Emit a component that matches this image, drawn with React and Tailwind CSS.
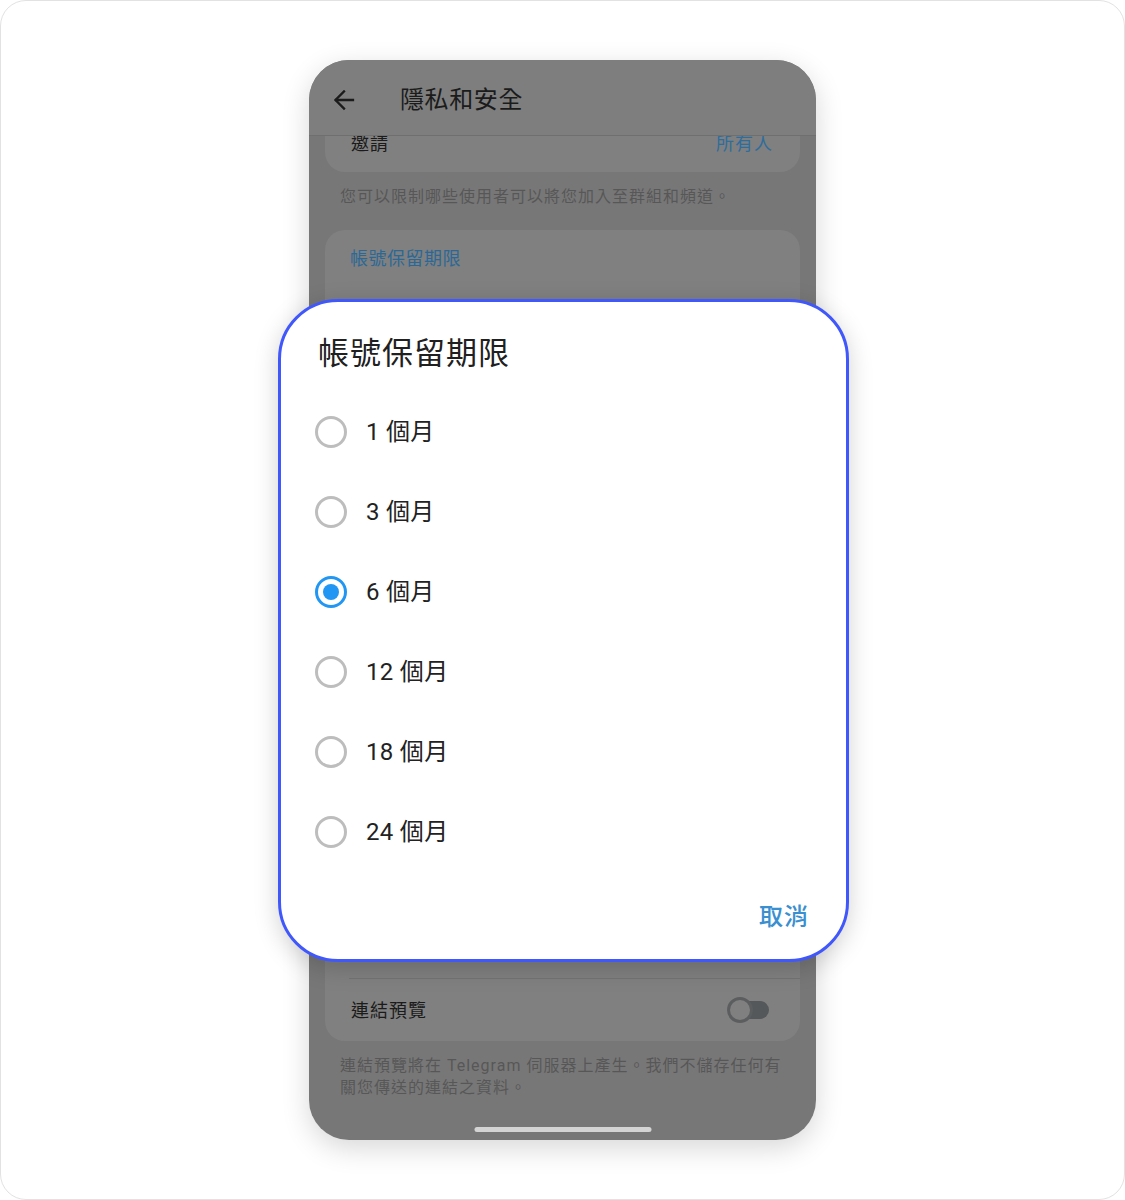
import { useState } from 'react'

const font = { fontFamily: 'Roboto, "Noto Sans CJK TC", "Noto Sans CJK SC", sans-serif' }

const options = ['1 個月', '3 個月', '6 個月', '12 個月', '18 個月', '24 個月']

function BackArrow() {
  return (
    <svg width="22" height="22" viewBox="0 0 22 22" fill="none" stroke="#1b1b1b" strokeWidth="2.3" strokeLinecap="square">
      <path d="M20 11H3" />
      <path d="M11 2.5L2.5 11L11 19.5" />
    </svg>
  )
}

function Radio({ checked }) {
  return (
    <span
      className={
        'flex h-[32px] w-[32px] shrink-0 items-center justify-center rounded-full border-[3px] ' +
        (checked ? 'border-[#2196f3]' : 'border-[#bdbdbd]')
      }
    >
      {checked && <span className="h-[16px] w-[16px] rounded-full bg-[#2196f3]" />}
    </span>
  )
}

export default function App() {
  const [value, setValue] = useState('6 個月')

  return (
    <div style={font} className="relative h-[1200px] w-[1125px] overflow-hidden rounded-[26px] border border-[#e2e2e2] bg-white">
      <div className="relative mx-auto mt-[59px] flex h-[1080px] w-[507px] flex-col overflow-hidden rounded-[40px] bg-[#777777] shadow-[0_8px_28px_rgba(0,0,0,0.16)]">
        <div className="relative z-10 flex h-[76px] shrink-0 items-center border-b border-[#6f6f6f] bg-[#7e7e7e] pl-[24px] pt-[5px]">
          <BackArrow />
          <span className="ml-[45px] text-[24px] leading-[32px] tracking-[0.6px] text-[#1b1b1b]">隱私和安全</span>
        </div>

        <div className="flex flex-1 flex-col px-[16px]">
          <div className="-mt-[22px] flex h-[58px] shrink-0 items-center justify-between rounded-[20px] bg-[#808080] pl-[26px] pr-[27px] text-[18px] tracking-[1px]">
            <span className="text-[#1b1b1b]">邀請</span>
            <span className="text-[#2f6d9c]">所有人</span>
          </div>
          <p className="px-[15px] pb-[22px] pt-[14px] text-[16px] leading-[22px] tracking-[1px] text-[#575757]">
            您可以限制哪些使用者可以將您加入至群組和頻道。
          </p>

          <div className="flex h-[811px] shrink-0 flex-col rounded-[20px] bg-[#808080]">
            <div className="px-[25px] pt-[17px] text-[18px] leading-[24px] tracking-[0.5px] text-[#2c6896]">帳號保留期限</div>
            <div className="flex-1" />
            <div className="ml-[24px] border-t border-[#737373]" />
            <div className="flex h-[62px] items-center justify-between pl-[26px] pr-[31px]">
              <span className="text-[18px] tracking-[1px] text-[#1b1b1b]">連結預覽</span>
              <span className="relative flex h-[26px] w-[42px] items-center">
                <span className="absolute right-0 h-[18px] w-[30px] rounded-full bg-[#54585b]" />
                <span className="relative h-[26px] w-[26px] rounded-full border-[3px] border-[#5b5d5f] bg-[#808080]" />
              </span>
            </div>
          </div>
          <p className="px-[15px] pt-[14px] text-[16px] leading-[22px] tracking-[1px] text-[#575757]">
            連結預覽將在 Telegram 伺服器上產生。我們不儲存任何有關您傳送的連結之資料。
          </p>
        </div>

        <div className="absolute bottom-[8px] left-1/2 h-[5px] w-[177px] -translate-x-1/2 rounded-full bg-[#d4d4d4]" />
      </div>

      <div className="absolute left-[277px] top-[298px] flex h-[663px] w-[571px] flex-col rounded-[60px] border-[3px] border-[#4058fb] bg-white shadow-[0_6px_24px_rgba(0,0,0,0.18)]">
        <h2 className="pl-[37px] pt-[32px] text-[31px] font-normal leading-[40px] tracking-[1px] text-[#202020]">帳號保留期限</h2>
        <div className="mt-[18px] flex flex-col pl-[34px]">
          {options.map((o) => (
            <button
              key={o}
              onClick={() => setValue(o)}
              className="flex h-[80px] items-center gap-[19px] text-left"
            >
              <Radio checked={value === o} />
              <span className="text-[24px] leading-[32px] tracking-[0.3px] text-[#222222]">{o}</span>
            </button>
          ))}
        </div>
        <div className="mt-[29px] flex justify-end pr-[37px]">
          <span className="text-[24px] font-medium leading-[32px] tracking-[1px] text-[#3a8fd0]">取消</span>
        </div>
      </div>
    </div>
  )
}
